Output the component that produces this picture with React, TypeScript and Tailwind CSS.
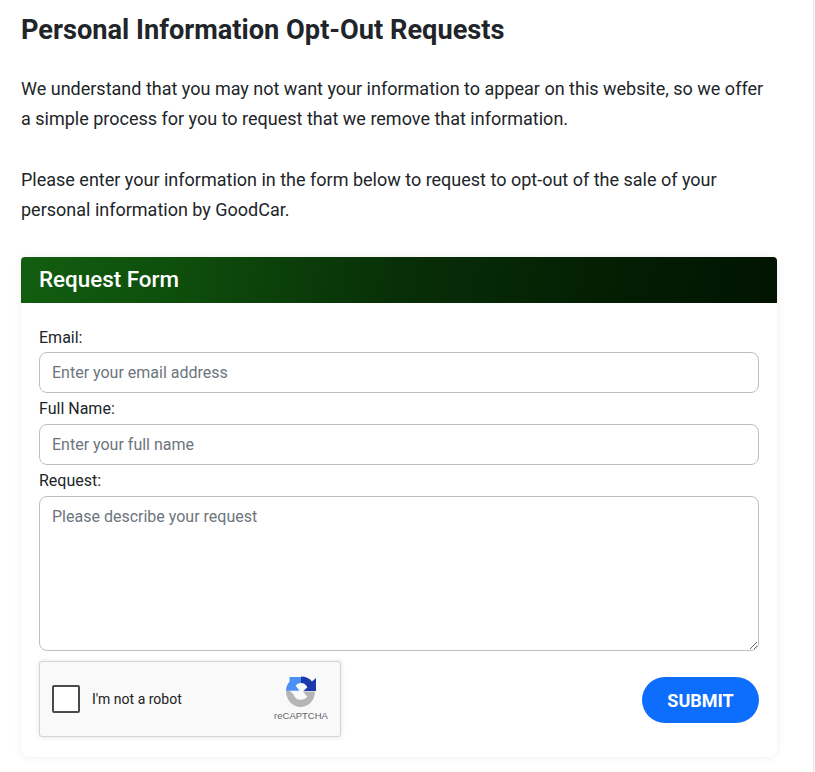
import React from "react"

function RecaptchaLogo() {
  return (
    <svg width="30" height="31" viewBox="0 0 30 31" className="block">
      {/* light blue arrow */}
      <path d="M3.5 1 H15 V7 C12.8 7 10.8 8 9.6 9.8 L13.5 14.8 H0 C0 11 1.4 7.8 3.6 5.4 L3.5 1 Z" fill="#4a90f5" />
      {/* dark blue arrow */}
      <path d="M15 0.5 C19.5 0.5 23.4 2.4 26 5.4 L30 2 V15 H17.5 L21.4 11.2 C20 8.6 17.8 7 15 7 Z" fill="#1c3aa9" />
      {/* grey arrow */}
      <path d="M0 15 H4 L7.6 18.4 C8.4 21.6 11.4 23.8 14.8 23.8 C17.6 23.8 19.6 22.6 21.2 20.8 L17 15.6 H29 C29 16.5 28.6 20 27.4 22.8 C25 27.6 20.2 31 14.8 31 C6.6 31 0 24 0 15 Z" fill="#b5b5b5" />
    </svg>
  )
}

export default function App() {
  return (
    <div className="min-h-[772px] w-[815px] bg-[#f8f9fa] font-['Roboto',sans-serif] text-[#212529]">
      <div className="h-[772px] w-[814px] overflow-hidden border-r border-[#e6e6e6] bg-white pl-[21px] pr-[37px]">
        <h1 className="pt-[13px] text-[27.2px] leading-[34px] font-bold">Personal Information Opt-Out Requests</h1>

        <p className="mt-[27px] text-[18px] leading-[30px]">
          We understand that you may not want your information to appear on this website, so we offer a simple process
          for you to request that we remove that information.
        </p>
        <p className="mt-[31px] text-[18px] leading-[30px]">
          Please enter your information in the form below to request to opt-out of the sale of your personal information
          by GoodCar.
        </p>

        {/* Request form card */}
        <div className="mt-[32px] w-[756px] rounded-lg bg-white shadow-[0_0_8px_rgba(0,0,0,0.07)]">
          <div className="flex h-[46px] items-center rounded-t-[4px] bg-[linear-gradient(100deg,#125e10_0%,#0e4f0c_20%,#082f07_50%,#031d03_80%,#011401_100%)] px-[18px] pb-[2px]">
            <h2 className="text-[22.4px] leading-none font-medium text-white">Request Form</h2>
          </div>

          <form className="px-[18px] pt-[21px] pb-[20px]">
            <label className="block text-[16px] leading-[28px]">Email:</label>
            <input
              placeholder="Enter your email address"
              className="block h-[41px] w-full rounded-lg border border-[#bfbfbf] px-3 text-[16px] placeholder:text-[#6c757d]"
            />
            <label className="mt-[1px] mb-[1px] block text-[16px] leading-[29px]">Full Name:</label>
            <input
              placeholder="Enter your full name"
              className="block h-[41px] w-full rounded-lg border border-[#bfbfbf] px-3 text-[16px] placeholder:text-[#6c757d]"
            />
            <label className="mt-[1px] mb-[1px] block text-[16px] leading-[29px]">Request:</label>
            <textarea
              placeholder="Please describe your request"
              className="block h-[155px] w-full rounded-lg border border-[#bfbfbf] px-3 py-[8px] text-[16px] leading-[24px] placeholder:text-[#6c757d]"
            />

            <div className="mt-[10px] flex items-start justify-between">
              {/* reCAPTCHA */}
              <div className="flex h-[76px] w-[302px] items-center rounded-[3px] border border-[#d3d3d3] bg-[#f9f9f9] pr-[12px] pl-[12px] shadow-[0_0_4px_1px_rgba(0,0,0,0.08)]">
                <div className="h-[28px] w-[28px] rounded-[2px] border-2 border-[#4a4a4a] bg-white" />
                <span className="ml-[12px] text-[14px] text-[#222]">I'm not a robot</span>
                <div className="ml-auto flex w-[54px] flex-col items-center">
                  <RecaptchaLogo />
                  <span className="mt-[3px] font-['Liberation_Sans',sans-serif] text-[9.5px] leading-[12px] whitespace-nowrap text-[#666]">reCAPTCHA</span>
                </div>
              </div>

              <button
                type="button"
                className="mt-[16px] h-[46px] w-[117px] rounded-full bg-[#0d6efd] text-[18px] font-bold text-white uppercase"
              >
                Submit
              </button>
            </div>
          </form>
        </div>
      </div>
    </div>
  )
}
